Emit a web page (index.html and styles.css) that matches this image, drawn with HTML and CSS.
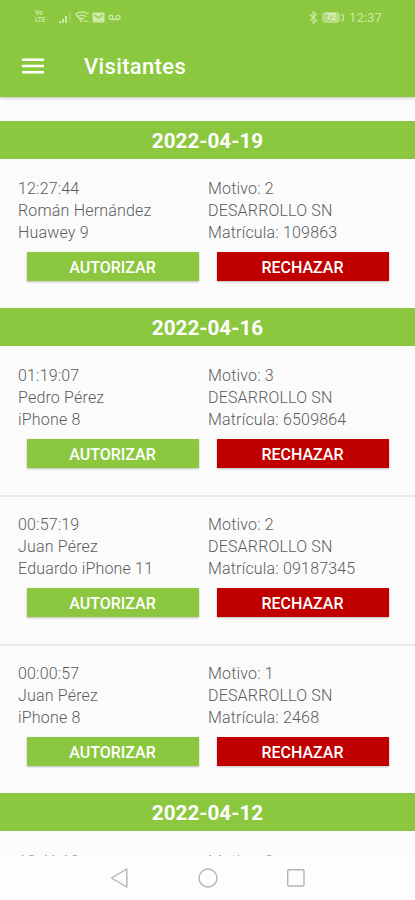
FILE: index.html
```html
<!DOCTYPE html>
<html lang="es">
<head>
  <meta charset="UTF-8" />
  <meta name="viewport" content="width=device-width, initial-scale=1.0"/>
  <title>Visitantes</title>
  <link rel="stylesheet" href="styles.css">
</head>
<body>

  <header class="header">
    <div class="status-bar">
      <div class="volte"><span>Vo</span><span>LTE</span></div>
      <svg class="signal" width="14" height="12" viewBox="0 0 14 12">
        <path d="M1 12v-2h2v2zM4 12V8h2v4zM7 12V5h2v7z" fill="currentColor"/>
        <path d="M11 12V1h1.5v11z" fill="currentColor" opacity="0.35"/>
      </svg>
      <svg class="wifi" width="14" height="12" viewBox="0 0 14 12" fill="none" stroke="currentColor" stroke-width="1.3">
        <path d="M0.5 3.2Q7 -1.4 13.5 3.2M2.5 5.8Q7 2.4 11.5 5.8M4.6 8.2Q7 6.2 9 8.2M1 3.5L7 11"/>
        <path d="M8.5 9.5l1.2 1.5 1.2-1.5M11.2 11l1.2-1.5 1.2 1.5" stroke-width="1"/>
      </svg>
      <svg class="mail" width="13" height="11" viewBox="0 0 13 11">
        <rect x="0.5" y="0.5" width="12" height="10" rx="1" fill="currentColor"/>
        <path d="M2.5 3l4 3 4-3" fill="none" stroke="#8cc83f" stroke-width="1.2"/>
      </svg>
      <svg class="voicemail" width="13" height="7" viewBox="0 0 13 7" fill="none" stroke="currentColor" stroke-width="1.3">
        <circle cx="3" cy="3.3" r="2"/>
        <circle cx="10" cy="3.3" r="2"/>
        <path d="M3 5.5h7"/>
      </svg>
      <svg class="bluetooth" width="9" height="13" viewBox="0 0 9 13" fill="none" stroke="currentColor" stroke-width="1.2">
        <path d="M1 3.5l6.5 6L4.3 12.3V0.8L7.5 3.5 1 9.5"/>
      </svg>
      <div class="battery">72</div>
      <svg class="battery-tip" width="4" height="9" viewBox="0 0 4 9" fill="none" stroke="currentColor" stroke-width="1.3">
        <path d="M0.8 0.8Q4.6 4.5 0.8 8.2"/>
      </svg>
      <span class="clock">12:37</span>
    </div>
    <div class="toolbar">
      <svg class="menu-icon" width="22" height="16" viewBox="0 0 22 16">
        <path d="M0 0.5h22v2.5H0zM0 6.8h22v2.5H0zM0 13h22v2.5H0z" fill="#fff"/>
      </svg>
      <h1>Visitantes</h1>
    </div>
  </header>

  <main class="list">
    <h2 class="date">2022-04-19</h2>
    <div class="visit">
      <div class="info">
        <p>12:27:44<br>Román Hernández<br>Huawey 9</p>
        <p>Motivo: 2<br>DESARROLLO SN<br>Matrícula: 109863</p>
      </div>
      <div class="actions">
        <button class="btn btn-ok">AUTORIZAR</button>
        <button class="btn btn-no">RECHAZAR</button>
      </div>
    </div>

    <h2 class="date">2022-04-16</h2>
    <div class="visit">
      <div class="info">
        <p>01:19:07<br>Pedro Pérez<br>iPhone 8</p>
        <p>Motivo: 3<br>DESARROLLO SN<br>Matrícula: 6509864</p>
      </div>
      <div class="actions">
        <button class="btn btn-ok">AUTORIZAR</button>
        <button class="btn btn-no">RECHAZAR</button>
      </div>
    </div>
    <div class="visit">
      <div class="info">
        <p>00:57:19<br>Juan Pérez<br>Eduardo iPhone 11</p>
        <p>Motivo: 2<br>DESARROLLO SN<br>Matrícula: 09187345</p>
      </div>
      <div class="actions">
        <button class="btn btn-ok">AUTORIZAR</button>
        <button class="btn btn-no">RECHAZAR</button>
      </div>
    </div>
    <div class="visit">
      <div class="info">
        <p>00:00:57<br>Juan Pérez<br>iPhone 8</p>
        <p>Motivo: 1<br>DESARROLLO SN<br>Matrícula: 2468</p>
      </div>
      <div class="actions">
        <button class="btn btn-ok">AUTORIZAR</button>
        <button class="btn btn-no">RECHAZAR</button>
      </div>
    </div>

    <h2 class="date">2022-04-12</h2>
    <div class="visit visit-last">
      <div class="info">
        <p>18:41:13</p>
        <p>Motivo: 2</p>
      </div>
    </div>
  </main>

  <nav class="nav-bar">
    <svg width="20" height="22" viewBox="0 0 20 22" fill="none" stroke="#b4b4b4" stroke-width="1.4" stroke-linejoin="round">
      <path d="M16.8 2v18L1.5 11z"/>
    </svg>
    <svg width="20" height="20" viewBox="0 0 20 20" fill="none" stroke="#b4b4b4" stroke-width="1.4">
      <circle cx="10" cy="10" r="9"/>
    </svg>
    <svg width="20" height="20" viewBox="0 0 20 20" fill="none" stroke="#b4b4b4" stroke-width="1.4">
      <rect x="1.7" y="1.7" width="16.3" height="16.3" rx="1"/>
    </svg>
  </nav>

</body>
</html>
```
FILE: styles.css
```css
* {
  box-sizing: border-box;
}

body {
  font-family: Roboto, sans-serif;
  margin: 0;
  height: 900px;
  background-color: #fbfbfc;
  color: #5c5c5c;
  display: flex;
  flex-direction: column;
  overflow: hidden;
}

.header {
  height: 97px;
  flex-shrink: 0;
  background-color: #8cc83f;
  color: #fff;
  box-shadow: 0 1px 3px rgba(0, 0, 0, 0.25);
}

.status-bar {
  height: 34px;
  padding: 0 33px 0 35px;
  display: flex;
  align-items: center;
  color: #cdeaa5;
}

.volte {
  width: 12px;
  display: flex;
  flex-direction: column;
  font-size: 6.5px;
  line-height: 7px;
  font-weight: 700;
}

.signal {
  margin-left: 11px;
}

.wifi {
  margin-left: 3px;
}

.mail {
  margin-left: 3px;
}

.voicemail {
  margin-left: 3px;
}

.bluetooth {
  margin-left: auto;
}

.battery {
  width: 18px;
  height: 11px;
  margin-left: 4px;
  border-radius: 4px;
  background-color: #b5dd80;
  font-size: 9px;
  line-height: 11px;
  font-weight: 500;
  text-align: center;
  color: #e6f5d0;
}

.battery-tip {
  margin-left: 1px;
}

.clock {
  margin-left: 4px;
  font-size: 12.5px;
  letter-spacing: 0.3px;
}

.toolbar {
  height: 64px;
  padding-left: 22px;
  display: flex;
  align-items: center;
}

.toolbar h1 {
  margin: 1px 0 0 40px;
  font-size: 22px;
  font-weight: 500;
  letter-spacing: 0.35px;
}

.list {
  flex: 1;
  min-height: 0;
  padding-top: 24px;
  overflow: hidden;
}

.date {
  height: 38px;
  margin: 0;
  background-color: #8cc83f;
  color: #fff;
  font-size: 20.7px;
  line-height: 40px;
  font-weight: 700;
  text-align: center;
}

.visit {
  height: 149px;
  padding-top: 19px;
}

.visit + .visit {
  border-top: 2px solid #e8e8e9;
  padding-top: 17px;
}

.visit-last {
  padding-top: 20px;
  color: #a0a0a0;
}

.info {
  display: grid;
  grid-template-columns: 190px 1fr;
  padding-left: 18px;
  font-size: 16px;
  line-height: 22px;
  font-weight: 300;
  letter-spacing: 0.18px;
}

.info p {
  margin: 0;
}

.actions {
  display: flex;
  gap: 18px;
  padding: 8px 26px 0 27px;
}

.btn {
  flex: 1;
  height: 28.5px;
  padding: 2px 1px 0 0;
  border: none;
  color: #fff;
  font-family: inherit;
  font-size: 16px;
  font-weight: 500;
  box-shadow: 0 1px 2px rgba(0, 0, 0, 0.25);
}

.btn-ok {
  background-color: #8cc83f;
}

.btn-no {
  background-color: #c00000;
}

.nav-bar {
  height: 44px;
  flex-shrink: 0;
  display: flex;
  justify-content: center;
  align-items: center;
  gap: 68px;
  background-color: #fdfdfd;
}
```
